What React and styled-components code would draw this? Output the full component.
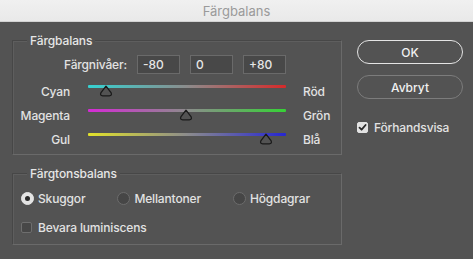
import React from "react";
import styled, { createGlobalStyle } from "styled-components";

const GlobalStyle = createGlobalStyle`
  html, body {
    margin: 0;
    padding: 0;
    background: #535353;
  }
  body {
    font-family: Inter, "Noto Sans", sans-serif;
    -webkit-font-smoothing: antialiased;
  }
`;

const Window = styled.div`
  width: 473px;
  height: 259px;
  background: #535353;
  display: flex;
  flex-direction: column;
  overflow: hidden;
`;

const TitleBar = styled.div`
  height: 21px;
  flex: none;
  background: linear-gradient(#f0f0f0, #e9e9e9);
  border-bottom: 1px solid #d2d2d2;
  display: flex;
  align-items: center;
  justify-content: center;
  color: #9a9a9a;
  font-size: 13px;
`;

const Body = styled.div`
  display: flex;
  padding: 18px 10px 0 12px;
  gap: 15px;
`;

const Left = styled.div`
  width: 330px;
  display: flex;
  flex-direction: column;
  gap: 18px;
`;

const Group = styled.div`
  position: relative;
  border: 1px solid #6b6b6b;
  border-color: #474747 #6a6a6a #6a6a6a #474747;
  box-shadow: inset 1px 1px 0 #5e5e5e;
  padding: ${({ $pad }) => $pad};
  display: flex;
  flex-direction: column;
  gap: ${({ $gap }) => $gap || "0px"};
`;

const Legend = styled.span`
  position: absolute;
  top: -8px;
  left: 14px;
  padding: 0 3px;
  background: #535353;
  color: #e6e6e6;
  font-size: 12px;
  font-weight: 500;
  letter-spacing: -0.1px;
  line-height: 15px;
`;

const Text = styled.span`
  color: #e2e2e2;
  font-size: 12px;
  font-weight: 500;
  letter-spacing: -0.15px;
  white-space: nowrap;
`;

const LevelsRow = styled.div`
  display: flex;
  align-items: center;
  height: 19px;
  margin-bottom: 5px;
`;

const LevelsLabel = styled(Text)`
  width: 114px;
  text-align: right;
  margin-right: 10px;
`;

const Inputs = styled.div`
  display: flex;
  gap: 10px;
`;

const NumBox = styled.div`
  width: 43px;
  height: 19px;
  box-sizing: border-box;
  background: #484848;
  border: 1px solid #6a6a6a;
  color: #e6e6e6;
  font-size: 12px;
  font-weight: 500;
  padding: 0 5px;
  display: flex;
  align-items: center;
`;

const SliderRow = styled.div`
  display: flex;
  align-items: center;
  height: 24px;
`;

const SideLabel = styled(Text)`
  width: 57px;
  text-align: right;
`;

const TrackWrap = styled.div`
  position: relative;
  width: 198px;
  height: 12px;
  margin: 0 17px 0 18px;
`;

const Track = styled.div`
  position: absolute;
  left: 0;
  right: 0;
  top: 0;
  height: 3px;
  border-radius: 1px;
  background: linear-gradient(
    to right,
    ${({ $from }) => $from},
    #8c8c8c 50%,
    ${({ $to }) => $to}
  );
`;

const Thumb = styled.svg`
  position: absolute;
  top: 0px;
  width: 14px;
  height: 12px;
  margin-left: -7px;
`;

const Right = styled.div`
  display: flex;
  flex-direction: column;
  width: 106px;
`;

const Button = styled.div`
  height: 24px;
  box-sizing: border-box;
  border-radius: 12px;
  border: ${({ $primary }) =>
    $primary ? "1.5px solid #e4e4e4" : "1px solid #7c7c7c"};
  display: flex;
  align-items: center;
  justify-content: center;
  color: #f0f0f0;
  font-size: 12px;
  font-weight: 500;
  margin-bottom: 11px;
`;

const CheckRow = styled.div`
  display: flex;
  align-items: center;
  gap: 6px;
  margin-top: ${({ $top }) => $top || "0px"};
`;

const Box = styled.div`
  width: 11px;
  height: 11px;
  border-radius: 2px;
  box-sizing: border-box;
  flex: none;
  background: ${({ $on }) => ($on ? "#e2e2e2" : "#474747")};
  border: 1px solid ${({ $on }) => ($on ? "#e2e2e2" : "#6e6e6e")};
  display: flex;
  align-items: center;
  justify-content: center;
`;

const RadioRow = styled.div`
  display: flex;
  align-items: center;
  gap: 32px;
  height: 14px;
`;

const RadioItem = styled.div`
  display: flex;
  align-items: center;
  gap: 4px;
`;

const Radio = styled.div`
  width: 13px;
  height: 13px;
  border-radius: 50%;
  box-sizing: border-box;
  background: ${({ $on }) => ($on ? "#e4e4e4" : "#464646")};
  border: 1px solid ${({ $on }) => ($on ? "#e4e4e4" : "#6c6c6c")};
  display: flex;
  align-items: center;
  justify-content: center;
  &::after {
    content: "";
    display: ${({ $on }) => ($on ? "block" : "none")};
    width: 5px;
    height: 5px;
    border-radius: 50%;
    background: #2a2a2a;
  }
`;

const sliders = [
  { left: "Cyan", right: "Röd", from: "#35d2d2", to: "#d62a2a", pos: 0.09 },
  { left: "Magenta", right: "Grön", from: "#d62ad6", to: "#36d236", pos: 0.495 },
  { left: "Gul", right: "Blå", from: "#e2e22a", to: "#2626d2", pos: 0.9 },
];

function ThumbIcon({ pos }) {
  return (
    <Thumb viewBox="0 0 14 12" style={{ left: `${pos * 100}%` }}>
      <path
        d="M7 1.2 L12 7.6 Q13.4 10.8 10.2 10.8 L3.8 10.8 Q0.6 10.8 2 7.6 Z"
        fill="#535353"
        stroke="#1a1a1a"
        strokeWidth="1.3"
        strokeLinejoin="round"
      />
    </Thumb>
  );
}

export default function App() {
  return (
    <>
      <GlobalStyle />
      <Window>
        <TitleBar>Färgbalans</TitleBar>
        <Body>
          <Left>
            <Group $pad="14px 0 3px 0">
              <Legend>Färgbalans</Legend>
              <LevelsRow>
                <LevelsLabel>Färgnivåer:</LevelsLabel>
                <Inputs>
                  <NumBox>-80</NumBox>
                  <NumBox>0</NumBox>
                  <NumBox>+80</NumBox>
                </Inputs>
              </LevelsRow>
              {sliders.map((s) => (
                <SliderRow key={s.left}>
                  <SideLabel>{s.left}</SideLabel>
                  <TrackWrap>
                    <Track $from={s.from} $to={s.to} />
                    <ThumbIcon pos={s.pos} />
                  </TrackWrap>
                  <Text>{s.right}</Text>
                </SliderRow>
              ))}
            </Group>
            <Group $pad="17px 8px 9px 8px" $gap="15px">
              <Legend>Färgtonsbalans</Legend>
              <RadioRow>
                <RadioItem>
                  <Radio $on />
                  <Text>Skuggor</Text>
                </RadioItem>
                <RadioItem>
                  <Radio />
                  <Text>Mellantoner</Text>
                </RadioItem>
                <RadioItem>
                  <Radio />
                  <Text>Högdagrar</Text>
                </RadioItem>
              </RadioRow>
              <CheckRow>
                <Box />
                <Text>Bevara luminiscens</Text>
              </CheckRow>
            </Group>
          </Left>
          <Right>
            <Button $primary>OK</Button>
            <Button>Avbryt</Button>
            <CheckRow $top="10px">
              <Box $on>
                <svg width="9" height="9" viewBox="0 0 9 9">
                  <path
                    d="M1.5 4.6 L3.6 6.7 L7.6 2"
                    fill="none"
                    stroke="#2a2a2a"
                    strokeWidth="1.8"
                    strokeLinecap="round"
                    strokeLinejoin="round"
                  />
                </svg>
              </Box>
              <Text>Förhandsvisa</Text>
            </CheckRow>
          </Right>
        </Body>
      </Window>
    </>
  );
}
